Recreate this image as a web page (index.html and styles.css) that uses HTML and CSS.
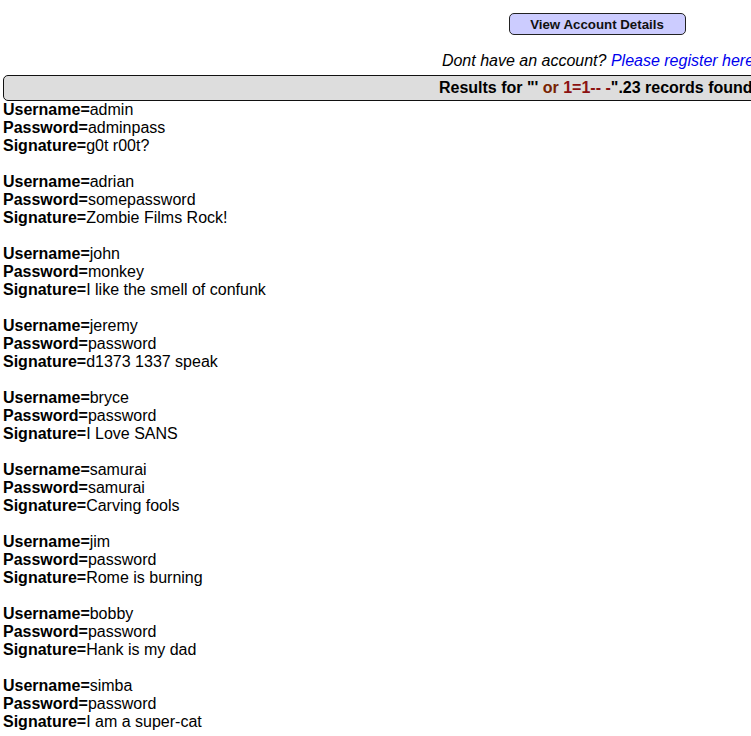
FILE: index.html
```html
<!DOCTYPE html>
<html>
<head>
<meta charset="utf-8">
<link rel="stylesheet" href="styles.css">
</head>
<body>
<div class="page">
  <div class="btn-row"><button class="btn">View Account Details</button></div>
  <p class="register">Dont have an account? <a href="#">Please register here</a></p>
  <div class="results">Results for "'<span class="kw"> or </span><span class="num">1=1-- -</span>".23 records found.</div>
  <div class="records">
    <div class="rec"><b>Username=</b>admin<br><b>Password=</b>adminpass<br><b>Signature=</b>g0t r00t?</div>
    <div class="rec"><b>Username=</b>adrian<br><b>Password=</b>somepassword<br><b>Signature=</b>Zombie Films Rock!</div>
    <div class="rec"><b>Username=</b>john<br><b>Password=</b>monkey<br><b>Signature=</b>I like the smell of confunk</div>
    <div class="rec"><b>Username=</b>jeremy<br><b>Password=</b>password<br><b>Signature=</b>d1373 1337 speak</div>
    <div class="rec"><b>Username=</b>bryce<br><b>Password=</b>password<br><b>Signature=</b>I Love SANS</div>
    <div class="rec"><b>Username=</b>samurai<br><b>Password=</b>samurai<br><b>Signature=</b>Carving fools</div>
    <div class="rec"><b>Username=</b>jim<br><b>Password=</b>password<br><b>Signature=</b>Rome is burning</div>
    <div class="rec"><b>Username=</b>bobby<br><b>Password=</b>password<br><b>Signature=</b>Hank is my dad</div>
    <div class="rec"><b>Username=</b>simba<br><b>Password=</b>password<br><b>Signature=</b>I am a super-cat</div>
  </div>
</div>
</body>
</html>
```
FILE: styles.css
```css
html, body {
  margin: 0;
  padding: 0;
  overflow: hidden;
  background: #fff;
}
body {
  font-family: "Liberation Sans", Arial, sans-serif;
  font-size: 16px;
  line-height: 18px;
  color: #000;
}
.page {
  width: 1190px;
  padding: 0 3px;
}
.btn-row {
  display: flex;
  justify-content: center;
  padding-top: 13px;
  padding-right: 2px;
}
.btn {
  box-sizing: border-box;
  width: 177px;
  height: 22px;
  background: #ccccff;
  border: 1px solid #222;
  border-radius: 5px;
  font-family: "Liberation Sans", Arial, sans-serif;
  font-size: 13.3px;
  font-weight: bold;
  color: #111;
  padding: 0;
}
.register {
  margin: 17px 0 0;
  text-align: center;
  font-style: italic;
  line-height: 18px;
}
.register a {
  color: #0000ee;
  text-decoration: none;
}
.results {
  box-sizing: border-box;
  margin-top: 5px;
  height: 26px;
  line-height: 24px;
  background: #dddddd;
  border: 1px solid #111;
  border-radius: 5px 0 0 5px;
  text-align: center;
  font-weight: bold;
}
.kw { color: #772200; }
.num { color: #8b1111; }
.rec {
  margin-bottom: 18px;
}
```
